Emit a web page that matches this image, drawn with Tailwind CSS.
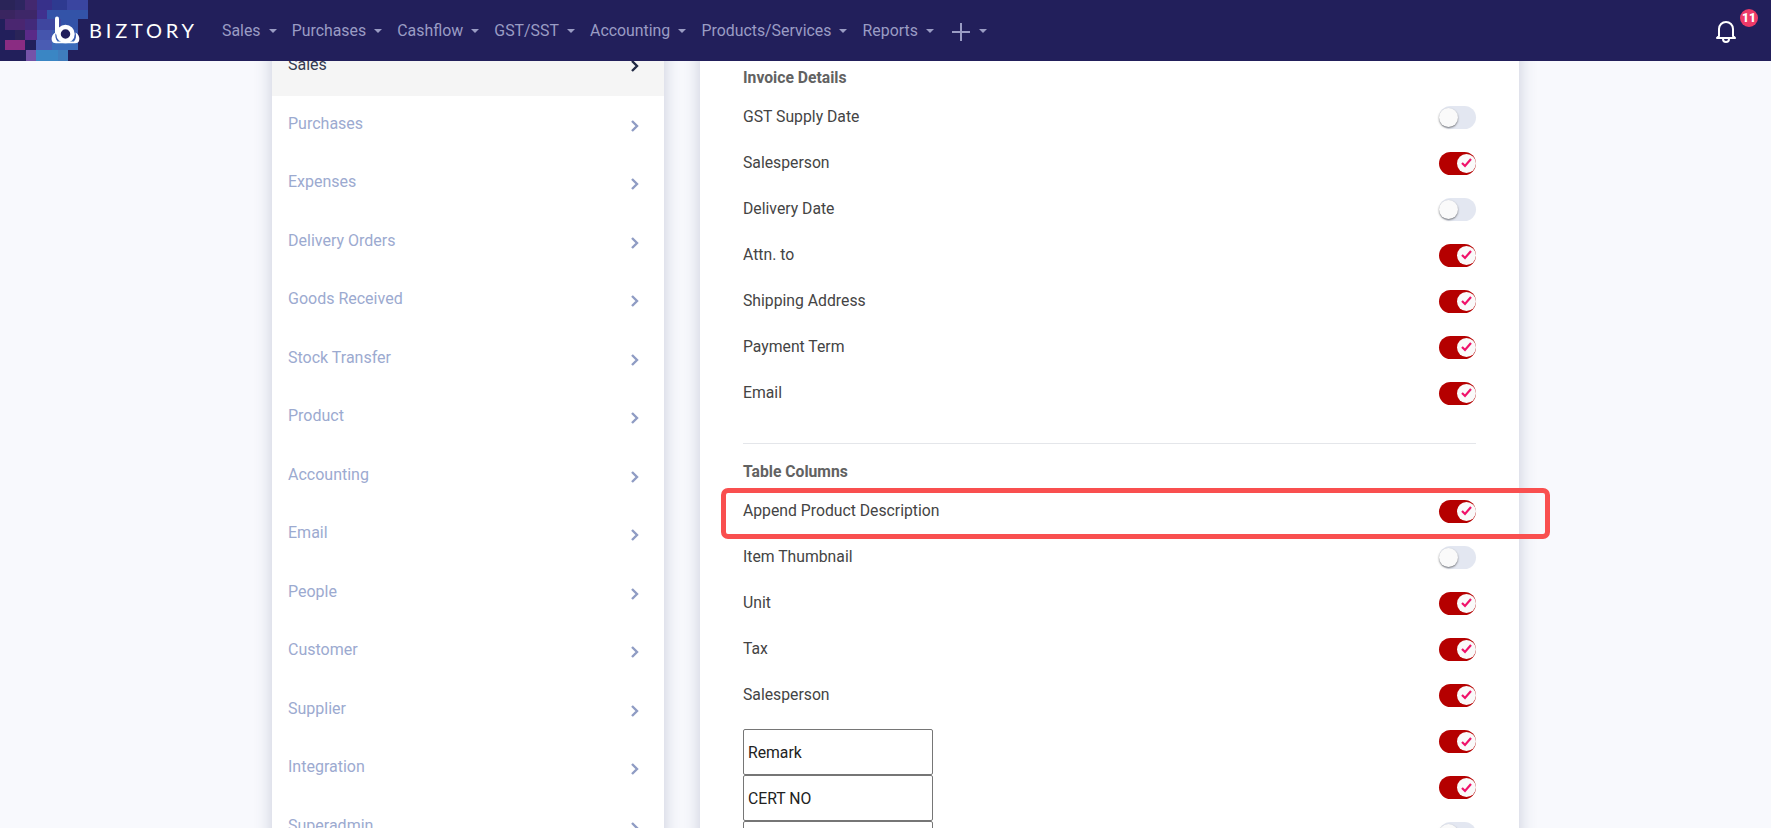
<!DOCTYPE html>
<html lang="en">
    <head>
        <meta charset="UTF-8">
        <meta name="viewport" content="width=device-width, initial-scale=1.0">
        <title>Biztory Settings</title>
        <script src="https://cdn.jsdelivr.net/npm/@tailwindcss/browser@4"></script>
    </head>

    <body class="h-screen overflow-hidden flex flex-col bg-[#f8f9fd] font-['Roboto',sans-serif]">
        <!-- Top nav -->
        <header class="relative z-20 h-[61px] shrink-0 flex items-center bg-[#221f5b] overflow-hidden">
            <svg class="absolute left-0 top-0" width="90" height="61" viewBox="0 0 90 61">
                <rect x="0" y="0" width="15" height="10" fill="#2a2458"/>
                <rect x="15" y="0" width="10" height="10" fill="#2d2660"/>
                <rect x="25" y="0" width="12" height="10" fill="#43286f"/>
                <rect x="37" y="0" width="15" height="10" fill="#37308a"/>
                <rect x="52" y="0" width="15" height="10" fill="#2e3a90"/>
                <rect x="67" y="0" width="21" height="10" fill="#3a45a0"/>
                <rect x="0" y="10" width="15" height="9" fill="#3a2560"/>
                <rect x="15" y="10" width="22" height="9" fill="#3e2768"/>
                <rect x="37" y="10" width="10" height="9" fill="#40308f"/>
                <rect x="47" y="10" width="41" height="9" fill="#3353a8"/>
                <rect x="5" y="19" width="20" height="11" fill="#4a2670"/>
                <rect x="25" y="19" width="12" height="11" fill="#432a7a"/>
                <rect x="37" y="19" width="24" height="11" fill="#3f469f"/>
                <rect x="61" y="19" width="17" height="11" fill="#3353a8"/>
                <rect x="15" y="30" width="10" height="10" fill="#2a2458"/>
                <rect x="25" y="30" width="12" height="10" fill="#5a2a88"/>
                <rect x="37" y="30" width="15" height="10" fill="#4555ad"/>
                <rect x="52" y="30" width="26" height="10" fill="#3b5cb0"/>
                <rect x="5" y="40" width="20" height="10" fill="#8a2c82"/>
                <rect x="36" y="40" width="16" height="10" fill="#4a5cb3"/>
                <rect x="52" y="40" width="26" height="10" fill="#3b6cba"/>
                <rect x="26" y="50" width="10" height="11" fill="#7553a8"/>
                <rect x="36" y="50" width="22" height="11" fill="#3a86c4"/>
                <rect x="58" y="50" width="10" height="11" fill="#3f7dbd"/>
            </svg>
            <div class="relative flex items-center w-[222px] h-full">
                <svg class="absolute left-[51px] top-[15px]" width="30" height="30" viewBox="0 0 30 30">
                    <path d="M6 3.5v14" stroke="#fff" stroke-width="4" stroke-linecap="round" fill="none"/>
                    <circle cx="14.5" cy="19" r="7" stroke="#fff" stroke-width="4.5" fill="#221f5b"/>
                    <path d="M4.5 17.5C1 19.5 0 23 1 26c.5 1.5 2 2.2 4 2.2h19c2 0 3.5-.7 4-2.2 1-3 0-6.5-3.500-8.500 1 3.500.5 6.500-1.500 9H6.500c-2-2.500-2.500-5.500-2-9z" fill="#fff"/>
                    <circle cx="14.500" cy="18" r="2.500" fill="#221f5b"/>
                </svg>
                <span class="absolute left-[89px] top-[18px] text-white text-[20px] leading-[24px] tracking-[0.19em] font-['Lato',sans-serif]">BIZTORY</span>
            </div>
            <nav class="flex items-center gap-[15.2px] text-[15.86px] text-[#9a9cc4]">
                <span class="flex items-center gap-[8px]">Sales <i class="w-0 h-0 border-x-[4px] border-x-transparent border-t-[4px] border-t-[#9a9cc4]"></i></span>
                <span class="flex items-center gap-[8px]">Purchases <i class="w-0 h-0 border-x-[4px] border-x-transparent border-t-[4px] border-t-[#9a9cc4]"></i></span>
                <span class="flex items-center gap-[8px]">Cashflow <i class="w-0 h-0 border-x-[4px] border-x-transparent border-t-[4px] border-t-[#9a9cc4]"></i></span>
                <span class="flex items-center gap-[8px]">GST/SST <i class="w-0 h-0 border-x-[4px] border-x-transparent border-t-[4px] border-t-[#9a9cc4]"></i></span>
                <span class="flex items-center gap-[8px]">Accounting <i class="w-0 h-0 border-x-[4px] border-x-transparent border-t-[4px] border-t-[#9a9cc4]"></i></span>
                <span class="flex items-center gap-[8px]">Products/Services <i class="w-0 h-0 border-x-[4px] border-x-transparent border-t-[4px] border-t-[#9a9cc4]"></i></span>
                <span class="flex items-center gap-[8px]">Reports <i class="w-0 h-0 border-x-[4px] border-x-transparent border-t-[4px] border-t-[#9a9cc4]"></i></span>
                <span class="flex items-center gap-[8px] ml-[2px]">
                    <svg class="mt-[2px]" width="20" height="20" viewBox="0 0 20 20"><path d="M10 1v18M1 10h18" stroke="#9a9cc4" stroke-width="2"/></svg>
                    <i class="w-0 h-0 border-x-[4px] border-x-transparent border-t-[4px] border-t-[#9a9cc4]"></i>
                </span>
            </nav>
            <div class="relative ml-auto mr-[34px] w-[22px] h-[24px]">
                <svg width="22" height="24" viewBox="0 0 22 24" fill="none" stroke="#fff" stroke-width="2" stroke-linecap="round" stroke-linejoin="round">
                    <path d="M4 17V10a7 7 0 0 1 14 0v7l2 2H2z"/>
                    <path d="M8 20a3 3 0 0 0 6 0"/>
                </svg>
                <span class="absolute left-[25px] top-[-10px] w-[18px] h-[18px] rounded-full bg-[#ee3a68] text-white text-[12px] leading-[18px] font-black text-center">11</span>
            </div>
        </header>

        <!-- Page body, scrolled so the first rows sit behind the nav -->
        <main class="flex-1 min-h-0 overflow-hidden">
            <div class="flex items-start pl-[272px] gap-[36px] mt-[-44px]">
                <aside class="w-[392px] shrink-0 bg-white shadow-[0_0_16px_rgba(60,70,110,0.25)] text-[16px] text-[#9caad0]">
                    <div class="h-[79px] pl-[16px] pr-[24px] pt-[36px] flex justify-between bg-[#f5f5f5] text-[#343a50]">
                        <span class="leading-[24px]">Sales</span>
                        <svg class="mt-[6px]" width="10" height="14" viewBox="0 0 10 14" fill="none" stroke="#222a45" stroke-width="2.4"><path d="M2 2l5 5-5 5"/></svg>
                    </div>
                    <div class="h-[58.47px] pl-[16px] pr-[24px] pt-[16px] flex justify-between"><span class="leading-[24px]">Purchases</span><svg class="mt-[7px]" width="10" height="14" viewBox="0 0 10 14" fill="none" stroke="#8f9cc4" stroke-width="2.4"><path d="M2 2l5 5-5 5"/></svg></div>
                    <div class="h-[58.47px] pl-[16px] pr-[24px] pt-[16px] flex justify-between"><span class="leading-[24px]">Expenses</span><svg class="mt-[7px]" width="10" height="14" viewBox="0 0 10 14" fill="none" stroke="#8f9cc4" stroke-width="2.4"><path d="M2 2l5 5-5 5"/></svg></div>
                    <div class="h-[58.47px] pl-[16px] pr-[24px] pt-[16px] flex justify-between"><span class="leading-[24px]">Delivery Orders</span><svg class="mt-[7px]" width="10" height="14" viewBox="0 0 10 14" fill="none" stroke="#8f9cc4" stroke-width="2.4"><path d="M2 2l5 5-5 5"/></svg></div>
                    <div class="h-[58.47px] pl-[16px] pr-[24px] pt-[16px] flex justify-between"><span class="leading-[24px]">Goods Received</span><svg class="mt-[7px]" width="10" height="14" viewBox="0 0 10 14" fill="none" stroke="#8f9cc4" stroke-width="2.4"><path d="M2 2l5 5-5 5"/></svg></div>
                    <div class="h-[58.47px] pl-[16px] pr-[24px] pt-[16px] flex justify-between"><span class="leading-[24px]">Stock Transfer</span><svg class="mt-[7px]" width="10" height="14" viewBox="0 0 10 14" fill="none" stroke="#8f9cc4" stroke-width="2.4"><path d="M2 2l5 5-5 5"/></svg></div>
                    <div class="h-[58.47px] pl-[16px] pr-[24px] pt-[16px] flex justify-between"><span class="leading-[24px]">Product</span><svg class="mt-[7px]" width="10" height="14" viewBox="0 0 10 14" fill="none" stroke="#8f9cc4" stroke-width="2.4"><path d="M2 2l5 5-5 5"/></svg></div>
                    <div class="h-[58.47px] pl-[16px] pr-[24px] pt-[16px] flex justify-between"><span class="leading-[24px]">Accounting</span><svg class="mt-[7px]" width="10" height="14" viewBox="0 0 10 14" fill="none" stroke="#8f9cc4" stroke-width="2.4"><path d="M2 2l5 5-5 5"/></svg></div>
                    <div class="h-[58.47px] pl-[16px] pr-[24px] pt-[16px] flex justify-between"><span class="leading-[24px]">Email</span><svg class="mt-[7px]" width="10" height="14" viewBox="0 0 10 14" fill="none" stroke="#8f9cc4" stroke-width="2.4"><path d="M2 2l5 5-5 5"/></svg></div>
                    <div class="h-[58.47px] pl-[16px] pr-[24px] pt-[16px] flex justify-between"><span class="leading-[24px]">People</span><svg class="mt-[7px]" width="10" height="14" viewBox="0 0 10 14" fill="none" stroke="#8f9cc4" stroke-width="2.4"><path d="M2 2l5 5-5 5"/></svg></div>
                    <div class="h-[58.47px] pl-[16px] pr-[24px] pt-[16px] flex justify-between"><span class="leading-[24px]">Customer</span><svg class="mt-[7px]" width="10" height="14" viewBox="0 0 10 14" fill="none" stroke="#8f9cc4" stroke-width="2.4"><path d="M2 2l5 5-5 5"/></svg></div>
                    <div class="h-[58.47px] pl-[16px] pr-[24px] pt-[16px] flex justify-between"><span class="leading-[24px]">Supplier</span><svg class="mt-[7px]" width="10" height="14" viewBox="0 0 10 14" fill="none" stroke="#8f9cc4" stroke-width="2.4"><path d="M2 2l5 5-5 5"/></svg></div>
                    <div class="h-[58.47px] pl-[16px] pr-[24px] pt-[16px] flex justify-between"><span class="leading-[24px]">Integration</span><svg class="mt-[7px]" width="10" height="14" viewBox="0 0 10 14" fill="none" stroke="#8f9cc4" stroke-width="2.4"><path d="M2 2l5 5-5 5"/></svg></div>
                    <div class="h-[58.47px] pl-[16px] pr-[24px] pt-[16px] flex justify-between"><span class="leading-[24px]">Superadmin</span><svg class="mt-[7px]" width="10" height="14" viewBox="0 0 10 14" fill="none" stroke="#8f9cc4" stroke-width="2.4"><path d="M2 2l5 5-5 5"/></svg></div>
                </aside>

                <section class="relative w-[819px] shrink-0 bg-white shadow-[0_0_16px_rgba(60,70,110,0.25)] pl-[43px] pr-[43px] pt-[49px] h-[900px] text-[15.75px] text-[#444]">
                    <h3 class="h-[24px] leading-[24px] text-[15.7px] font-bold text-[#626262]">Invoice Details</h3>
                    <div class="mt-[4px]">
                        <div class="flex items-center justify-between h-[46px]"><span>GST Supply Date</span><span class="relative w-[37px] h-[23px] rounded-full bg-[#e3e7f1]"><i class="absolute left-0 top-[2px] w-[19px] h-[19px] rounded-full bg-[#fafafa] shadow-[0_1px_2px_rgba(0,0,0,0.5)]"></i></span></div>
                        <div class="flex items-center justify-between h-[46px]"><span>Salesperson</span><span class="relative w-[37px] h-[23px] rounded-full bg-[#b50000]"><i class="absolute right-0 top-[2px] w-[19px] h-[19px] rounded-full bg-[#fafafa] flex items-center justify-center"><svg width="11" height="10" viewBox="0 0 11 10" fill="none" stroke="#f0116a" stroke-width="2.2"><path d="M1 5l3 3 6-7"/></svg></i></span></div>
                        <div class="flex items-center justify-between h-[46px]"><span>Delivery Date</span><span class="relative w-[37px] h-[23px] rounded-full bg-[#e3e7f1]"><i class="absolute left-0 top-[2px] w-[19px] h-[19px] rounded-full bg-[#fafafa] shadow-[0_1px_2px_rgba(0,0,0,0.5)]"></i></span></div>
                        <div class="flex items-center justify-between h-[46px]"><span>Attn. to</span><span class="relative w-[37px] h-[23px] rounded-full bg-[#b50000]"><i class="absolute right-0 top-[2px] w-[19px] h-[19px] rounded-full bg-[#fafafa] flex items-center justify-center"><svg width="11" height="10" viewBox="0 0 11 10" fill="none" stroke="#f0116a" stroke-width="2.2"><path d="M1 5l3 3 6-7"/></svg></i></span></div>
                        <div class="flex items-center justify-between h-[46px]"><span>Shipping Address</span><span class="relative w-[37px] h-[23px] rounded-full bg-[#b50000]"><i class="absolute right-0 top-[2px] w-[19px] h-[19px] rounded-full bg-[#fafafa] flex items-center justify-center"><svg width="11" height="10" viewBox="0 0 11 10" fill="none" stroke="#f0116a" stroke-width="2.2"><path d="M1 5l3 3 6-7"/></svg></i></span></div>
                        <div class="flex items-center justify-between h-[46px]"><span>Payment Term</span><span class="relative w-[37px] h-[23px] rounded-full bg-[#b50000]"><i class="absolute right-0 top-[2px] w-[19px] h-[19px] rounded-full bg-[#fafafa] flex items-center justify-center"><svg width="11" height="10" viewBox="0 0 11 10" fill="none" stroke="#f0116a" stroke-width="2.2"><path d="M1 5l3 3 6-7"/></svg></i></span></div>
                        <div class="flex items-center justify-between h-[46px]"><span>Email</span><span class="relative w-[37px] h-[23px] rounded-full bg-[#b50000]"><i class="absolute right-0 top-[2px] w-[19px] h-[19px] rounded-full bg-[#fafafa] flex items-center justify-center"><svg width="11" height="10" viewBox="0 0 11 10" fill="none" stroke="#f0116a" stroke-width="2.2"><path d="M1 5l3 3 6-7"/></svg></i></span></div>
                    </div>
                    <hr class="mt-[27px] border-t border-[#e4e6ea]">
                    <h3 class="mt-[16px] h-[24px] leading-[24px] text-[15.7px] font-bold text-[#626262]">Table Columns</h3>
                    <div class="mt-[4px]">
                        <div class="flex items-center justify-between h-[46px]"><span>Append Product Description</span><span class="relative w-[37px] h-[23px] rounded-full bg-[#b50000]"><i class="absolute right-0 top-[2px] w-[19px] h-[19px] rounded-full bg-[#fafafa] flex items-center justify-center"><svg width="11" height="10" viewBox="0 0 11 10" fill="none" stroke="#f0116a" stroke-width="2.2"><path d="M1 5l3 3 6-7"/></svg></i></span></div>
                        <div class="flex items-center justify-between h-[46px]"><span>Item Thumbnail</span><span class="relative w-[37px] h-[23px] rounded-full bg-[#e3e7f1]"><i class="absolute left-0 top-[2px] w-[19px] h-[19px] rounded-full bg-[#fafafa] shadow-[0_1px_2px_rgba(0,0,0,0.5)]"></i></span></div>
                        <div class="flex items-center justify-between h-[46px]"><span>Unit</span><span class="relative w-[37px] h-[23px] rounded-full bg-[#b50000]"><i class="absolute right-0 top-[2px] w-[19px] h-[19px] rounded-full bg-[#fafafa] flex items-center justify-center"><svg width="11" height="10" viewBox="0 0 11 10" fill="none" stroke="#f0116a" stroke-width="2.2"><path d="M1 5l3 3 6-7"/></svg></i></span></div>
                        <div class="flex items-center justify-between h-[46px]"><span>Tax</span><span class="relative w-[37px] h-[23px] rounded-full bg-[#b50000]"><i class="absolute right-0 top-[2px] w-[19px] h-[19px] rounded-full bg-[#fafafa] flex items-center justify-center"><svg width="11" height="10" viewBox="0 0 11 10" fill="none" stroke="#f0116a" stroke-width="2.2"><path d="M1 5l3 3 6-7"/></svg></i></span></div>
                        <div class="flex items-center justify-between h-[46px]"><span>Salesperson</span><span class="relative w-[37px] h-[23px] rounded-full bg-[#b50000]"><i class="absolute right-0 top-[2px] w-[19px] h-[19px] rounded-full bg-[#fafafa] flex items-center justify-center"><svg width="11" height="10" viewBox="0 0 11 10" fill="none" stroke="#f0116a" stroke-width="2.2"><path d="M1 5l3 3 6-7"/></svg></i></span></div>
                        <div class="flex justify-between h-[46px] mt-[11px]"><input class="w-[190px] h-[46px] border border-[#767676] rounded-[2px] px-[4px] text-[#222]" value="Remark"><span class="relative mt-[1px] w-[37px] h-[23px] rounded-full bg-[#b50000]"><i class="absolute right-0 top-[2px] w-[19px] h-[19px] rounded-full bg-[#fafafa] flex items-center justify-center"><svg width="11" height="10" viewBox="0 0 11 10" fill="none" stroke="#f0116a" stroke-width="2.2"><path d="M1 5l3 3 6-7"/></svg></i></span></div>
                        <div class="flex justify-between h-[46px]"><input class="w-[190px] h-[46px] border border-[#767676] rounded-[2px] px-[4px] text-[#222]" value="CERT NO"><span class="relative mt-[1px] w-[37px] h-[23px] rounded-full bg-[#b50000]"><i class="absolute right-0 top-[2px] w-[19px] h-[19px] rounded-full bg-[#fafafa] flex items-center justify-center"><svg width="11" height="10" viewBox="0 0 11 10" fill="none" stroke="#f0116a" stroke-width="2.2"><path d="M1 5l3 3 6-7"/></svg></i></span></div>
                        <div class="flex justify-between h-[46px]"><input class="w-[190px] h-[46px] border border-[#767676] rounded-[2px] px-[4px] text-[#222]" value=""><span class="relative mt-[1px] w-[37px] h-[23px] rounded-full bg-[#e3e7f1]"><i class="absolute left-0 top-[2px] w-[19px] h-[19px] rounded-full bg-[#fafafa] shadow-[0_1px_2px_rgba(0,0,0,0.5)]"></i></span></div>
                    </div>
                </section>
            </div>
        </main>

        <!-- Red callout around the highlighted row -->
        <div class="absolute z-10 left-[721px] top-[488px] w-[829px] h-[51px] rounded-[7px] border-[5px] border-[#f94f4f]"></div>
    </body>
</html>
